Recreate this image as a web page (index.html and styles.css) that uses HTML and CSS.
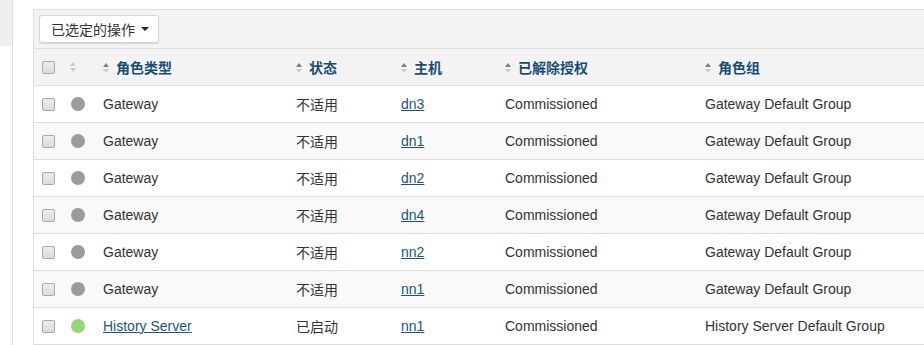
FILE: index.html
```html
<!DOCTYPE html>
<html>
<head>
<meta charset="utf-8">
<link rel="stylesheet" href="styles.css">
</head>
<body>
<div class="page">
  <div class="sidebar"><div class="sidebar-top"></div></div>
  <div class="panel">
    <div class="toolbar">
      <button class="btn">已选定的操作 <span class="caret"></span></button>
    </div>
    <table class="grid">
      <colgroup>
        <col class="c1"><col class="c2"><col class="c3"><col class="c4"><col class="c5"><col class="c6"><col class="c7">
      </colgroup>
      <thead>
        <tr>
          <th><span class="cb"></span></th>
          <th><span class="sort light"></span></th>
          <th><span class="sort"></span>角色类型</th>
          <th><span class="sort"></span>状态</th>
          <th><span class="sort"></span>主机</th>
          <th><span class="sort"></span>已解除授权</th>
          <th><span class="sort"></span>角色组</th>
        </tr>
      </thead>
      <tbody>
        <tr><td><span class="cb"></span></td><td><span class="dot"></span></td><td>Gateway</td><td>不适用</td><td><a href="#">dn3</a></td><td>Commissioned</td><td>Gateway Default Group</td></tr>
        <tr><td><span class="cb"></span></td><td><span class="dot"></span></td><td>Gateway</td><td>不适用</td><td><a href="#">dn1</a></td><td>Commissioned</td><td>Gateway Default Group</td></tr>
        <tr><td><span class="cb"></span></td><td><span class="dot"></span></td><td>Gateway</td><td>不适用</td><td><a href="#">dn2</a></td><td>Commissioned</td><td>Gateway Default Group</td></tr>
        <tr><td><span class="cb"></span></td><td><span class="dot"></span></td><td>Gateway</td><td>不适用</td><td><a href="#">dn4</a></td><td>Commissioned</td><td>Gateway Default Group</td></tr>
        <tr><td><span class="cb"></span></td><td><span class="dot"></span></td><td>Gateway</td><td>不适用</td><td><a href="#">nn2</a></td><td>Commissioned</td><td>Gateway Default Group</td></tr>
        <tr><td><span class="cb"></span></td><td><span class="dot"></span></td><td>Gateway</td><td>不适用</td><td><a href="#">nn1</a></td><td>Commissioned</td><td>Gateway Default Group</td></tr>
        <tr><td><span class="cb"></span></td><td><span class="dot green"></span></td><td><a href="#">History Server</a></td><td>已启动</td><td><a href="#">nn1</a></td><td>Commissioned</td><td>History Server Default Group</td></tr>
      </tbody>
    </table>
  </div>
</div>
</body>
</html>
```

FILE: styles.css
```css
html, body {
  margin: 0;
  padding: 0;
  background: #fff;
  width: 924px;
  height: 345px;
  overflow: hidden;
}
body {
  font-family: "Liberation Sans", Arial, "Noto Sans CJK SC", sans-serif;
  font-size: 14px;
  color: #333;
}
.page {
  display: flex;
  height: 345px;
  width: 924px;
}
.sidebar {
  width: 12px;
  border-right: 1px solid #ddd;
  flex: none;
}
.sidebar-top {
  height: 46px;
  background: #eee;
}
.panel {
  margin-left: 20px;
  margin-top: 9px;
  border-left: 1px solid #ddd;
  border-top: 1px solid #ddd;
  flex: 1;
  min-width: 0;
  overflow: hidden;
}
.toolbar {
  height: 38px;
  background: #f3f3f3;
  border-bottom: 1px solid #ddd;
  display: flex;
  align-items: center;
  padding-left: 5px;
}
.btn {
  height: 28px;
  width: 120px;
  background: #fff;
  border: 1px solid #d6d6d6;
  border-radius: 3px;
  box-shadow: 0 1px 1px rgba(0,0,0,0.12);
  font-family: inherit;
  font-size: 14px;
  color: #333;
  padding: 0 0 0 11px;
  text-align: left;
  display: flex;
  align-items: center;
}
.caret {
  display: inline-block;
  width: 0;
  height: 0;
  margin-left: 6px;
  border-left: 4px solid transparent;
  border-right: 4px solid transparent;
  border-top: 4px solid #222;
}
.grid {
  border-collapse: collapse;
  table-layout: fixed;
  width: 100%;
}
.c1 { width: 28px; }
.c2 { width: 33px; }
.c3 { width: 193px; }
.c4 { width: 105px; }
.c5 { width: 104px; }
.c6 { width: 200px; }
th, td {
  height: 36px;
  padding: 0 0 0 8px;
  border-bottom: 1px solid #ddd;
  text-align: left;
  vertical-align: middle;
  white-space: nowrap;
  overflow: hidden;
}
thead th {
  background: #f3f3f3;
  color: #174d75;
  font-weight: bold;
  font-size: 14px;
}
tbody tr:nth-child(even) td {
  background: #f9f9f9;
}
a {
  color: #1d5580;
  text-decoration: underline;
}
.cb {
  display: inline-block;
  width: 11px;
  height: 11px;
  border: 1px solid #a9a9a9;
  border-radius: 2px;
  background: linear-gradient(#ececec, #dcdcdc);
  vertical-align: middle;
  position: relative;
  top: -1px;
}
.dot {
  display: inline-block;
  width: 14px;
  height: 14px;
  border-radius: 50%;
  background: #9b9b9b;
  vertical-align: middle;
  position: relative;
  top: -1px;
  margin-left: 1px;
}
.dot.green {
  background: #94d874;
}
.sort {
  display: inline-block;
  width: 6px;
  height: 10px;
  margin-right: 7px;
  vertical-align: middle;
  position: relative;
  top: -1px;
}
.sort::before {
  content: "";
  position: absolute;
  left: 0;
  top: 0;
  border-left: 3px solid transparent;
  border-right: 3px solid transparent;
  border-bottom: 4px solid #6f8296;
}
.sort::after {
  content: "";
  position: absolute;
  left: 0;
  top: 6px;
  border-left: 3px solid transparent;
  border-right: 3px solid transparent;
  border-top: 4px solid #c8cdd2;
}
.sort.light::before {
  border-bottom-color: #c8cdd2;
}
```
